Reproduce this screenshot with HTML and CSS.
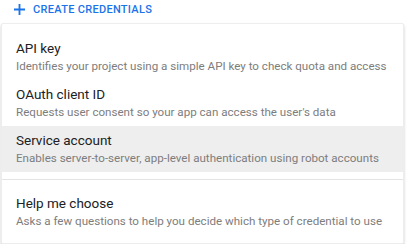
FILE: index.html
```html
<!DOCTYPE html>
<html lang="en">
<head>
    <meta charset="UTF-8">
    <title>Create credentials</title>
    <link rel="stylesheet" href="styles.css">
</head>
<body>
    <div class="page">
        <button class="create-button">
            <svg class="plus-icon" viewBox="0 0 12 12" width="11" height="11">
                <path d="M6 0v12M0 6h12" stroke="currentColor" stroke-width="2"/>
            </svg>
            <span>Create credentials</span>
        </button>

        <div class="menu">
            <div class="menu-item">
                <div class="item-title">API key</div>
                <div class="item-desc">Identifies your project using a simple API key to check quota and access</div>
            </div>
            <div class="menu-item">
                <div class="item-title">OAuth client ID</div>
                <div class="item-desc">Requests user consent so your app can access the user's data</div>
            </div>
            <div class="menu-item active">
                <div class="item-title">Service account</div>
                <div class="item-desc">Enables server-to-server, app-level authentication using robot accounts</div>
            </div>
            <div class="menu-divider"></div>
            <div class="menu-item">
                <div class="item-title">Help me choose</div>
                <div class="item-desc">Asks a few questions to help you decide which type of credential to use</div>
            </div>
        </div>
    </div>
</body>
</html>
```

FILE: styles.css
```css
* {
    margin: 0;
    padding: 0;
    box-sizing: border-box;
}

body {
    background: #fff;
    font-family: Roboto, 'Liberation Sans', sans-serif;
}

.page {
    padding: 0 3px 0 1px;
}

.create-button {
    display: flex;
    align-items: center;
    gap: 8px;
    height: 23px;
    padding: 0 0 4px 13px;
    background: none;
    border: none;
    color: #1a73e8;
    font-family: Roboto, 'Liberation Sans', sans-serif;
    font-size: 11px;
    font-weight: 500;
    text-transform: uppercase;
    letter-spacing: 0.3px;
}

.plus-icon {
    display: block;
}

.menu {
    background: #fff;
    border: 1px solid #ededed;
    border-radius: 2px;
    box-shadow: 0 2px 3px rgba(0, 0, 0, 0.2);
    padding: 10px 0 8px;
}

.menu-item {
    padding: 4px 14px 6px;
}

.menu-item.active {
    background: #eeeeee;
}

.item-title {
    color: #202124;
    font-size: 13.5px;
    line-height: 20px;
}

.item-desc {
    color: #7d7d7d;
    font-size: 11.6px;
    line-height: 16px;
}

.menu-divider {
    height: 1px;
    background: #e4e4e4;
    margin: 7px 0 9px;
}
```
